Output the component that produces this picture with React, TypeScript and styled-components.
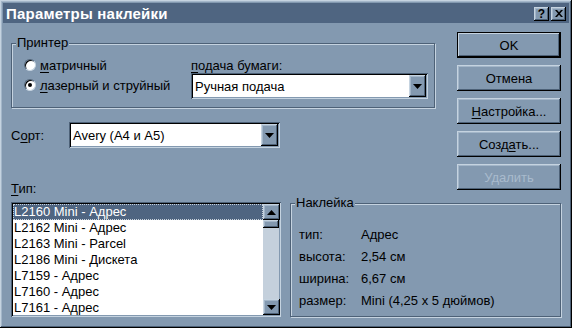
import React from 'react';
import styled, { createGlobalStyle } from 'styled-components';

const c = {
	face: '#8399b0',
	title: '#4f6581',
	hi: '#c5d3e0',
	light: '#a3b6c9',
	shadow: '#4d6177',
	dark: '#000',
	track: '#c4d0dc',
	disabled: '#a9bbcd',
};

const GlobalStyle = createGlobalStyle`
  html, body { margin: 0; padding: 0; background: #fff; }
  body { font-family: "Liberation Sans", Arial, sans-serif; font-size: 13px; color: #000; }
  * { box-sizing: border-box; }
`;

const raised = `
  box-shadow: inset -1px -1px 0 ${c.dark}, inset 1px 1px 0 ${c.hi},
    inset -2px -2px 0 ${c.shadow}, inset 2px 2px 0 ${c.light};
`;

const sunken = `
  box-shadow: inset 1px 1px 0 ${c.shadow}, inset -1px -1px 0 ${c.hi},
    inset 2px 2px 0 ${c.dark}, inset -2px -2px 0 ${c.face};
`;

const Window = styled.div`
  width: 572px;
  height: 328px;
  background: ${c.face};
  padding: 3px;
  display: flex;
  flex-direction: column;
  ${raised}
`;

const TitleBar = styled.div`
  height: 20px;
  background: ${c.title};
  display: flex;
  align-items: center;
  justify-content: space-between;
  padding: 0 3px 0 3px;
`;

const TitleText = styled.span`
  color: #fff;
  font-weight: bold;
  font-size: 15px;
  letter-spacing: 0.2px;
`;

const TitleButtons = styled.div`
  display: flex;
  gap: 2px;
  margin-top: 1px;
`;

const TitleButton = styled.div`
  width: 15px;
  height: 14px;
  background: ${c.face};
  display: flex;
  align-items: center;
  justify-content: center;
  font-weight: bold;
  font-size: 12px;
  line-height: 1;
  ${raised}
`;

const Content = styled.div`
  flex: 1;
  display: flex;
  flex-direction: column;
  padding: 0 8px;
`;

const TopArea = styled.div`
  display: flex;
  justify-content: space-between;
`;

const LeftTop = styled.div`
  width: 424px;
  display: flex;
  flex-direction: column;
`;

const Group = styled.fieldset<{ $h: number; $w?: number }>`
  margin: 0;
  padding: 0;
  height: ${(p) => p.$h}px;
  width: ${(p) => (p.$w ? `${p.$w}px` : 'auto')};
  border: 1px solid ${c.shadow};
  box-shadow: 1px 1px 0 ${c.hi}, inset 1px 1px 0 ${c.hi};
  min-width: 0;
`;

const Legend = styled.legend`
  margin-left: 4px;
  padding: 0 1px;
  line-height: 14px;
  background: ${c.face};
`;

const PrinterGroup = styled(Group)`
  margin-top: 13px;
  display: flex;
`;

const RadioCol = styled.div`
  display: flex;
  flex-direction: column;
  gap: 6px;
  padding: 8px 0 0 12px;
  width: 179px;
`;

const RadioRow = styled.div`
  display: flex;
  align-items: center;
  gap: 4px;
  height: 14px;
`;

const RadioDot = styled.span<{ $on?: boolean }>`
  width: 12px;
  height: 12px;
  border-radius: 50%;
  background: #fff;
  border: 1px solid;
  border-color: ${c.shadow} ${c.hi} ${c.hi} ${c.shadow};
  box-shadow: inset 1px 1px 0 ${c.dark};
  display: flex;
  align-items: center;
  justify-content: center;
  &::after {
    content: '';
    width: 4px;
    height: 4px;
    border-radius: 50%;
    background: ${(p) => (p.$on ? '#000' : 'transparent')};
  }
`;

const FeedCol = styled.div`
  display: flex;
  flex-direction: column;
  padding-top: 8px;
  width: 237px;
`;

const Label = styled.span`
  line-height: 15px;
`;

const U = styled.span`
  text-decoration: underline;
  text-underline-offset: 2px;
`;

const Combo = styled.div<{ $w: number }>`
  width: ${(p) => p.$w}px;
  height: 26px;
  background: #fff;
  display: flex;
  align-items: center;
  justify-content: space-between;
  padding: 2px;
  ${sunken}
`;

const ComboText = styled.span`
  padding-left: 2px;
`;

const ArrowButton = styled.div<{ $h?: number }>`
  width: 17px;
  height: ${(p) => p.$h ?? 22}px;
  background: ${c.face};
  display: flex;
  align-items: center;
  justify-content: center;
  flex-shrink: 0;
  ${raised}
`;

const Arrow = ({ up }: { up?: boolean }) => (
	<svg width="9" height="5" viewBox="0 0 9 5">
		<path d={up ? 'M4.5 0L9 5H0z' : 'M0 0h9L4.5 5z'} fill="#000" />
	</svg>
);

const SortRow = styled.div`
  display: flex;
  align-items: center;
  margin-top: 14px;
`;

const SortLabel = styled(Label)`
  width: 58px;
`;

const TypeLabel = styled(Label)`
  margin-top: 33px;
`;

const ButtonCol = styled.div`
  width: 104px;
  margin-top: 9px;
  display: flex;
  flex-direction: column;
  gap: 7px;
`;

const Button = styled.div<{ $default?: boolean; $disabled?: boolean }>`
  height: 26px;
  display: flex;
  align-items: center;
  justify-content: center;
  color: ${(p) => (p.$disabled ? c.disabled : '#000')};
  ${(p) =>
		p.$default
			? `box-shadow: inset 0 0 0 1px ${c.dark}, inset -2px -2px 0 ${c.dark}, inset 2px 2px 0 ${c.hi}, inset -3px -3px 0 ${c.shadow};`
			: raised}
`;

const BottomRow = styled.div`
  display: flex;
  justify-content: space-between;
`;

const ListBox = styled.div`
  width: 270px;
  height: 115px;
  margin-top: 6px;
  background: #fff;
  padding: 2px;
  display: flex;
  ${sunken}
`;

const ListItems = styled.div`
  flex: 1;
  display: flex;
  flex-direction: column;
  overflow: hidden;
`;

const ListItem = styled.div<{ $sel?: boolean }>`
  height: 16px;
  flex-shrink: 0;
  line-height: 16px;
  padding-left: 1px;
  white-space: nowrap;
  background: ${(p) => (p.$sel ? c.title : 'transparent')};
  color: ${(p) => (p.$sel ? '#fff' : '#000')};
  outline: ${(p) => (p.$sel ? '1px dotted #c9d3dd' : 'none')};
  outline-offset: -1px;
`;

const ScrollBar = styled.div`
  width: 16px;
  background: ${c.track};
  display: flex;
  flex-direction: column;
  justify-content: space-between;
`;

const Thumb = styled.div`
  height: 8px;
  background: ${c.face};
  ${raised}
`;

const ScrollTop = styled.div`
  display: flex;
  flex-direction: column;
`;

const InfoGroup = styled(Group)`
  padding: 13px 0 0 0;
`;

const InfoGrid = styled.div`
  display: grid;
  grid-template-columns: 62px auto;
  grid-auto-rows: 22px;
  align-items: center;
  padding-left: 8px;
`;

const items = [
	'L2160 Mini - Адрес',
	'L2162 Mini - Адрес',
	'L2163 Mini - Parcel',
	'L2186 Mini - Дискета',
	'L7159 - Адрес',
	'L7160 - Адрес',
	'L7161 - Адрес',
];

const info: [string, string][] = [
	['тип:', 'Адрес'],
	['высота:', '2,54 см'],
	['ширина:', '6,67 см'],
	['размер:', 'Mini (4,25 x 5 дюймов)'],
];

export default function App() {
	return (
		<>
			<GlobalStyle />
			<Window>
				<TitleBar>
					<TitleText>Параметры наклейки</TitleText>
					<TitleButtons>
						<TitleButton>?</TitleButton>
						<TitleButton>
							<svg width="8" height="7" viewBox="0 0 8 7">
								<path d="M0 0h2l2 2.3L6 0h2L5 3.5 8 7H6L4 4.7 2 7H0l3-3.5z" fill="#000" />
							</svg>
						</TitleButton>
					</TitleButtons>
				</TitleBar>
				<Content>
					<TopArea>
						<LeftTop>
							<PrinterGroup $h={72}>
								<Legend>Принтер</Legend>
								<RadioCol>
									<RadioRow>
										<RadioDot />
										<Label>
											<U>м</U>атричный
										</Label>
									</RadioRow>
									<RadioRow>
										<RadioDot $on />
										<Label>
											<U>л</U>азерный и струйный
										</Label>
									</RadioRow>
								</RadioCol>
								<FeedCol>
									<Label>
										<U>п</U>одача бумаги:
									</Label>
									<Combo $w={237}>
										<ComboText>Ручная подача</ComboText>
										<ArrowButton>
											<Arrow />
										</ArrowButton>
									</Combo>
								</FeedCol>
							</PrinterGroup>
							<SortRow>
								<SortLabel>
									С<U>о</U>рт:
								</SortLabel>
								<Combo $w={211}>
									<ComboText>Avery (A4 и A5)</ComboText>
									<ArrowButton>
										<Arrow />
									</ArrowButton>
								</Combo>
							</SortRow>
							<TypeLabel>
								<U>Т</U>ип:
							</TypeLabel>
						</LeftTop>
						<ButtonCol>
							<Button $default>OK</Button>
							<Button>Отмена</Button>
							<Button>
								<span>
									<U>Н</U>астройка...
								</span>
							</Button>
							<Button>
								<span>
									Созд<U>а</U>ть...
								</span>
							</Button>
							<Button $disabled>Удалить</Button>
						</ButtonCol>
					</TopArea>
					<BottomRow>
						<ListBox>
							<ListItems>
								{items.map((t, i) => (
									<ListItem key={t} $sel={i === 0}>
										{t}
									</ListItem>
								))}
							</ListItems>
							<ScrollBar>
								<ScrollTop>
									<ArrowButton $h={16}>
										<Arrow up />
									</ArrowButton>
									<Thumb />
								</ScrollTop>
								<ArrowButton $h={16}>
									<Arrow />
								</ArrowButton>
							</ScrollBar>
						</ListBox>
						<InfoGroup $h={121} $w={271}>
							<Legend>Наклейка</Legend>
							<InfoGrid>
								{info.map(([k, v]) => (
									<React.Fragment key={k}>
										<span>{k}</span>
										<span>{v}</span>
									</React.Fragment>
								))}
							</InfoGrid>
						</InfoGroup>
					</BottomRow>
				</Content>
			</Window>
		</>
	);
}
